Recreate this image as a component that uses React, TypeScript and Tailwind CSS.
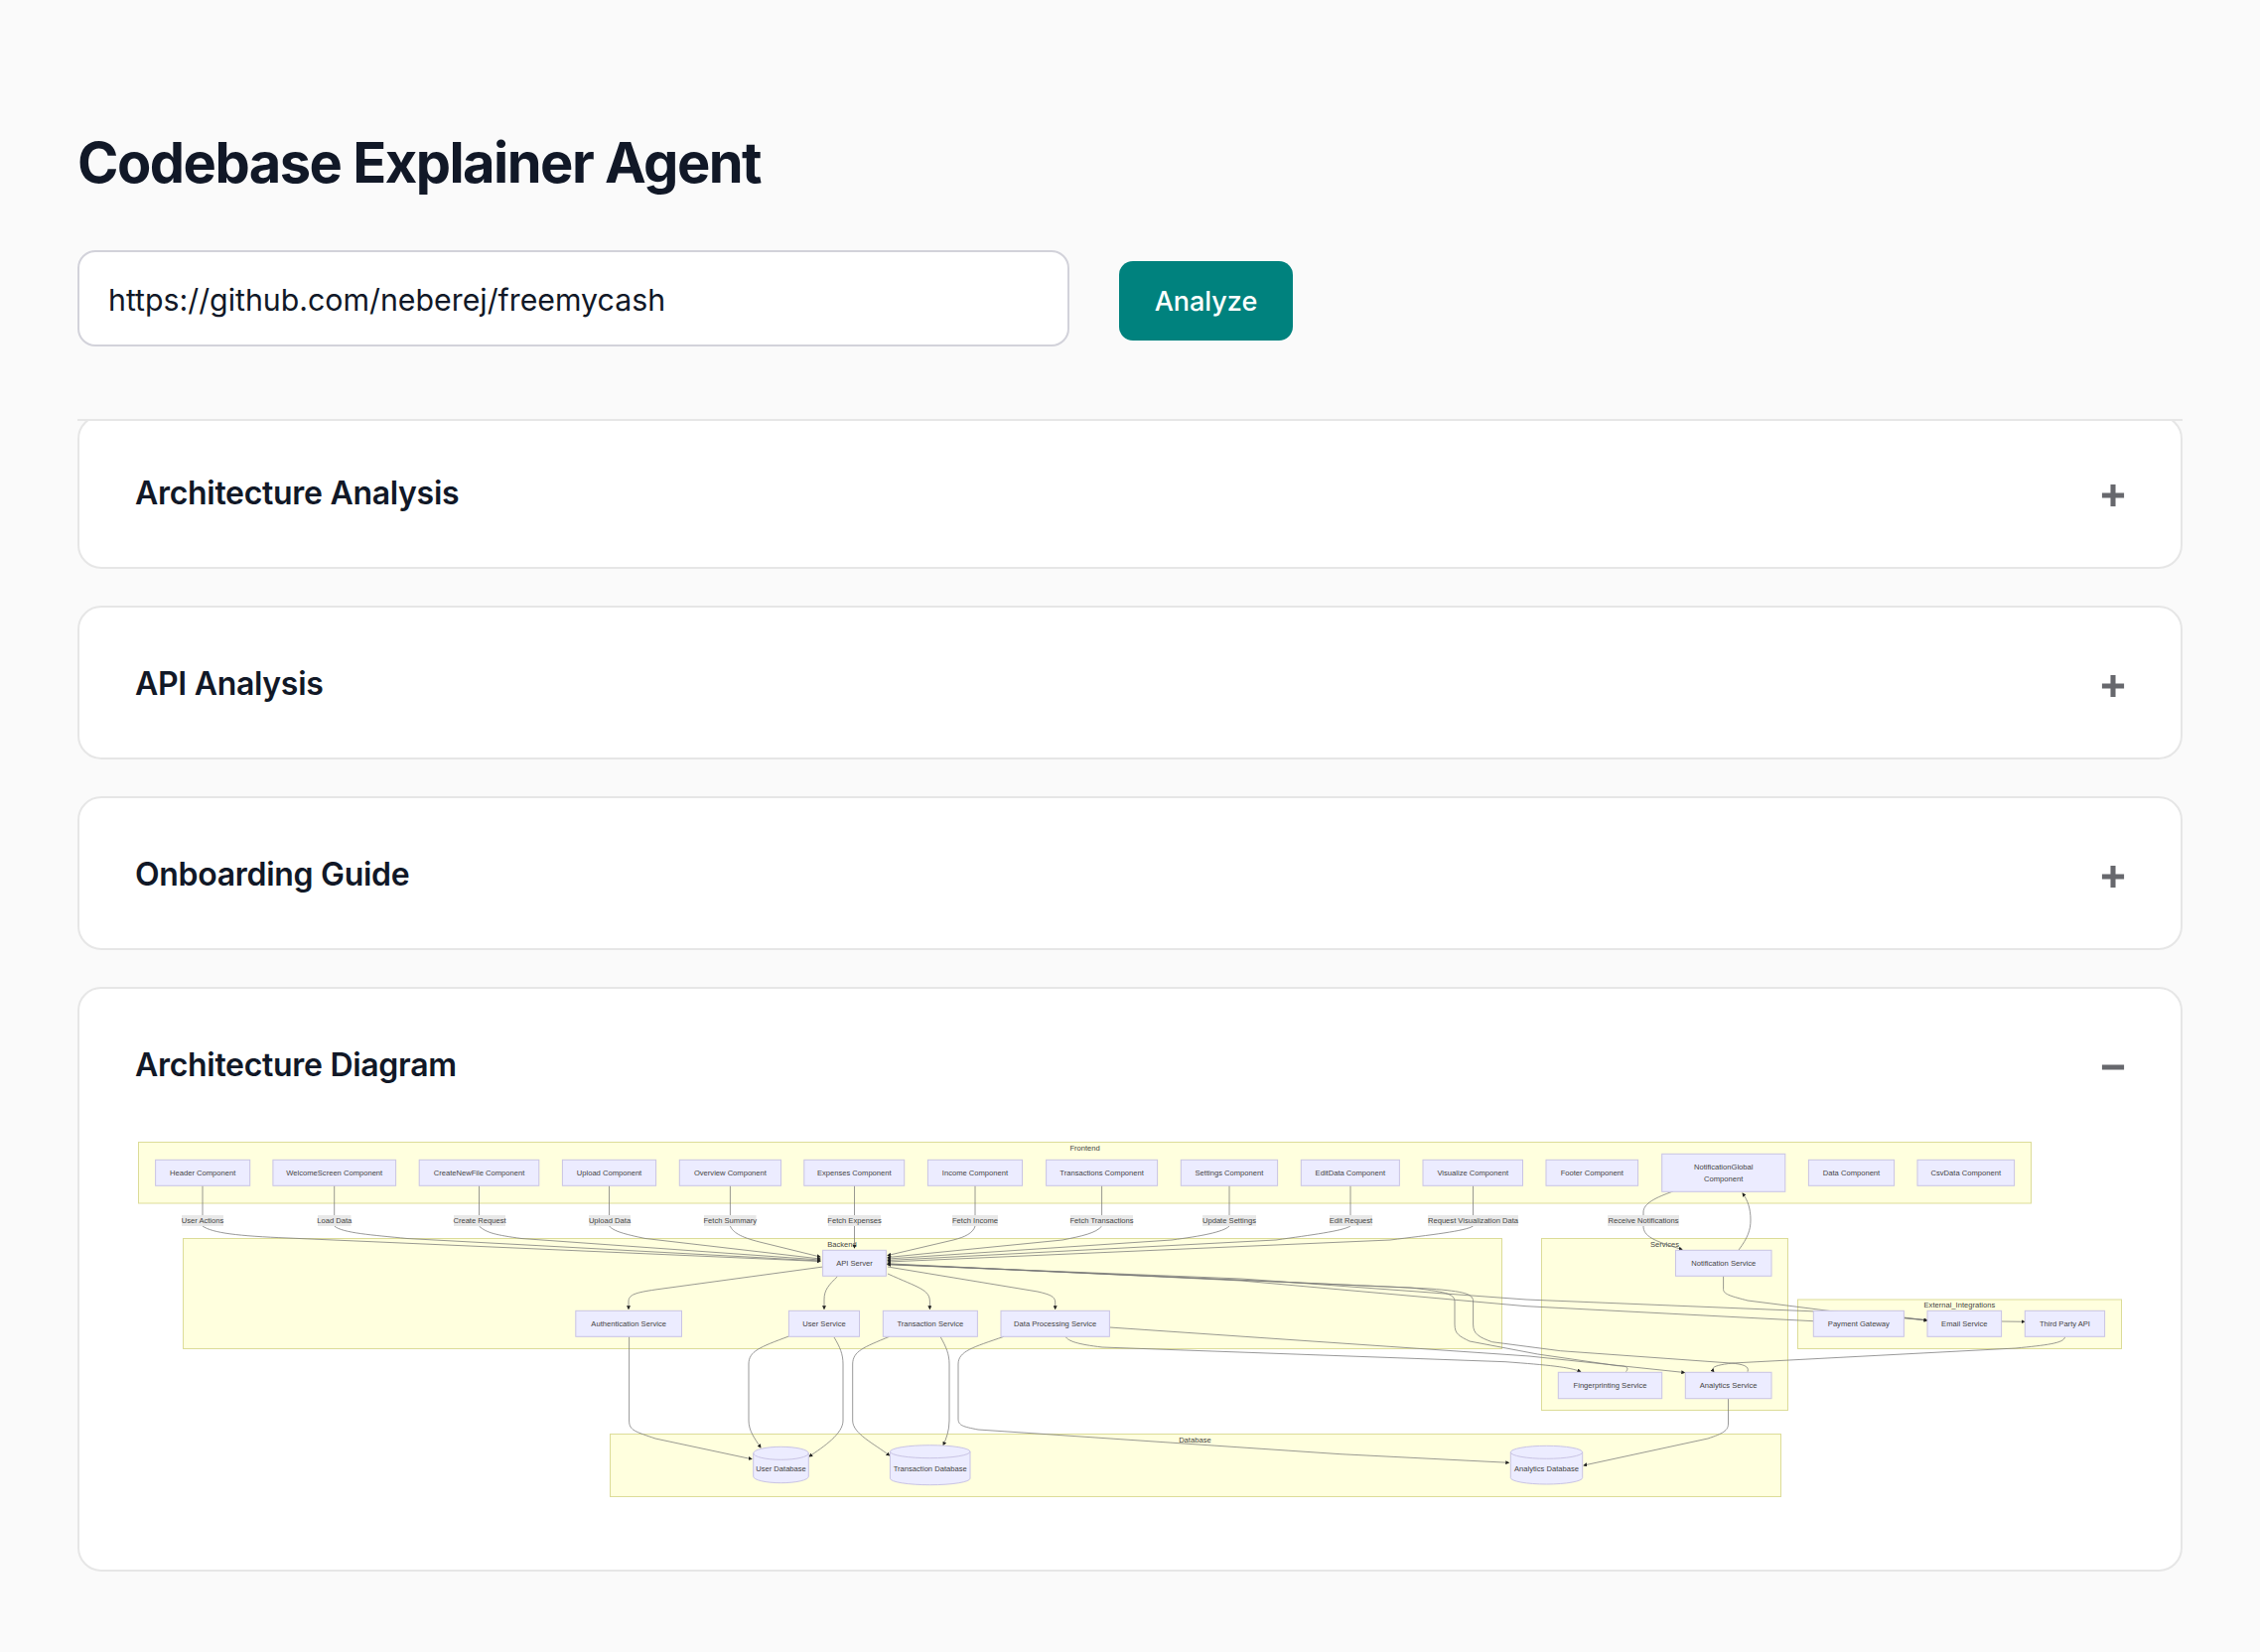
import { Plus, Minus } from 'lucide-react'

type Box = { label: string; x1: number; x2: number; y1?: number; y2?: number }

const CLUSTERS = [
  { label: 'Frontend', x1: 139.5, x2: 2045.5, y1: 1151.5, y2: 1213, cx: 1092.6, ty: 1157 },
  { label: 'Backend', x1: 184.5, x2: 1512.5, y1: 1248.5, y2: 1359.5, cx: 848, ty: 1254 },
  { label: 'Services', x1: 1552.5, x2: 1800.5, y1: 1248.5, y2: 1421.5, cx: 1676.5, ty: 1254 },
  { label: 'External_Integrations', x1: 1810.5, x2: 2136.5, y1: 1310, y2: 1359.5, cx: 1973.4, ty: 1315 },
  { label: 'Database', x1: 614.5, x2: 1793.5, y1: 1445.5, y2: 1508.5, cx: 1203.4, ty: 1451 },
]

const NODES: Box[] = [
  { label: 'Header Component', x1: 156.6, x2: 251.7 },
  { label: 'WelcomeScreen Component', x1: 274.9, x2: 398.6 },
  { label: 'CreateNewFile Component', x1: 422.2, x2: 542.8 },
  { label: 'Upload Component', x1: 566.4, x2: 660.6 },
  { label: 'Overview Component', x1: 684.3, x2: 786.5 },
  { label: 'Expenses Component', x1: 809.8, x2: 910.7 },
  { label: 'Income Component', x1: 934.4, x2: 1029.5 },
  { label: 'Transactions Component', x1: 1053.6, x2: 1165.6 },
  { label: 'Settings Component', x1: 1189.3, x2: 1286.6 },
  { label: 'EditData Component', x1: 1310.3, x2: 1409.4 },
  { label: 'Visualize Component', x1: 1433, x2: 1533.5 },
  { label: 'Footer Component', x1: 1557, x2: 1649.6 },
  { label: 'Data Component', x1: 1821.4, x2: 1907.6 },
  { label: 'CsvData Component', x1: 1931, x2: 2028.6 },
  { label: 'API Server', x1: 828.6, x2: 892.4, y1: 1260.3, y2: 1286.3 },
  { label: 'Notification Service', x1: 1687.5, x2: 1784, y1: 1260.3, y2: 1286.3 },
  { label: 'Authentication Service', x1: 579.8, x2: 686.5, y1: 1321.3, y2: 1347.3 },
  { label: 'User Service', x1: 794.4, x2: 865.5, y1: 1321.3, y2: 1347.3 },
  { label: 'Transaction Service', x1: 889.3, x2: 984.4, y1: 1321.3, y2: 1347.3 },
  { label: 'Data Processing Service', x1: 1008, x2: 1117.4, y1: 1321.3, y2: 1347.3 },
  { label: 'Payment Gateway', x1: 1826.3, x2: 1917.4, y1: 1321.3, y2: 1347.3 },
  { label: 'Email Service', x1: 1941, x2: 2015.6, y1: 1321.3, y2: 1347.3 },
  { label: 'Third Party API', x1: 2039.3, x2: 2119.6, y1: 1321.3, y2: 1347.3 },
  { label: 'Fingerprinting Service', x1: 1569.3, x2: 1673.7, y1: 1383.3, y2: 1409.7 },
  { label: 'Analytics Service', x1: 1697.3, x2: 1784, y1: 1383.3, y2: 1409.7 },
]

const CYLINDERS = [
  { label: 'User Database', x1: 758.7, x2: 814.3, y1: 1458.3, y2: 1494.7 },
  { label: 'Transaction Database', x1: 896.4, x2: 977, y1: 1456.7, y2: 1496.7 },
  { label: 'Analytics Database', x1: 1521.3, x2: 1593.7, y1: 1457.3, y2: 1496 },
]

const EDGE_LABELS = [
  { label: 'User Actions', x1: 183, x2: 225 },
  { label: 'Load Data', x1: 320, x2: 353.5 },
  { label: 'Create Request', x1: 457, x2: 509 },
  { label: 'Upload Data', x1: 593, x2: 635 },
  { label: 'Fetch Summary', x1: 709, x2: 761.5 },
  { label: 'Fetch Expenses', x1: 834, x2: 887 },
  { label: 'Fetch Income', x1: 959, x2: 1005 },
  { label: 'Fetch Transactions', x1: 1078, x2: 1141 },
  { label: 'Update Settings', x1: 1211, x2: 1265 },
  { label: 'Edit Request', x1: 1339, x2: 1382 },
  { label: 'Request Visualization Data', x1: 1438, x2: 1529 },
  { label: 'Receive Notifications', x1: 1619, x2: 1691 },
]

// edges with an arrowhead at the end
const EDGES = [
  'M204 1195V1236C214 1243 240 1246 290 1248L826 1271.5',
  'M336.7 1195V1236C345 1243 375 1245 410 1248.5L826 1271',
  'M482.5 1195V1236C490 1243 500 1245 525 1248.5L826 1270',
  'M613.5 1195V1236C618 1241 628 1244 650 1248.5L826 1269',
  'M735.4 1195V1236C738 1242 745 1247 765 1252L826 1267',
  'M860.5 1195V1258',
  'M982 1195V1236C980 1243 972 1247 960 1250L894 1265.5',
  'M1109.6 1195V1236C1104 1243 1090 1246 1070 1250L894 1267.5',
  'M1238 1195V1236C1232 1242 1210 1246 1180 1250L894 1269',
  'M1360 1195V1236C1352 1241 1320 1245 1285 1250L894 1270.5',
  'M1483.5 1195V1236C1476 1241 1440 1245 1400 1250L894 1272',
  'M1685 1201C1668 1207 1655 1213 1655 1222V1236C1655 1246 1665 1251 1694 1259.5',
  'M1751 1260C1760 1248 1763 1240 1763 1230C1763 1218 1760 1210 1755 1203',
  'M829 1277L660 1300C640 1303 633 1305 633 1312V1319.5',
  'M843.5 1286.7C835 1295 830 1300 830 1310V1319.5',
  'M894 1284C925 1298 936.4 1300 936.4 1312V1319.5',
  'M894 1277L1045 1302C1058 1305 1062 1307 1062.7 1312V1319.5',
  'M794.4 1347C765 1358 754 1362 754 1375V1432C754 1442 760 1450 766 1459',
  'M840 1348C846 1358 849 1365 849 1375V1432C849 1445 830 1458 815 1468',
  'M633.6 1347.3V1432C633.6 1442 640 1443 660 1450L757 1470.7',
  'M895.7 1347.3C870 1358 858.7 1362 858.7 1375V1432C858.7 1445 880 1455 895.7 1467',
  'M947 1347.3C953 1358 956 1365 956 1375V1432C956 1442 953 1450 950 1456.5',
  'M1011 1347.3C980 1358 965 1362 965 1375V1430C965 1437 970 1438 985 1441L1350 1465.7L1519.5 1474.3',
  'M1073 1347.3C1076 1352 1085 1355 1110 1358L1516 1372.7C1560 1376 1580 1378 1591.7 1382.5',
  'M1117.4 1338L1540 1367L1696.5 1383.5',
  'M2079.5 1347.7C2079 1354 2060 1356 2030 1359L1745 1374C1728 1376 1722 1378 1726 1383',
  'M1760 1382.7C1762 1377 1755 1375 1743 1374L1571.5 1361.7L1502.6 1352.7C1490 1348 1483.6 1345 1483.6 1335V1312C1483.6 1304 1475 1302 1440 1299L894 1274.5',
  'M1637.5 1382.7C1642 1377 1635 1377 1629 1376.7L1548.5 1365L1480 1352C1470 1347 1465 1345 1465 1335V1312C1465 1304 1455 1302 1420 1298L894 1274.2',
  'M1826 1331.7L1537 1316.7L1250 1291L894 1273.8',
  'M1941 1330.5L1847 1322.7L1537 1310L1250 1289L894 1274.8',
  'M1735.6 1286.3V1299.7C1735.6 1305 1745 1307 1760 1311L1847 1322L1941 1331',
  'M1917.4 1328L1940.5 1331',
  'M2015.6 1332L2038.8 1332.3',
  'M1740.5 1409.7V1435C1740.5 1442 1735 1445 1720 1450L1595 1477',
]

const svgText = '[font-family:Liberation_Sans,sans-serif] text-[7.6px] fill-[#444]'

function ArchitectureDiagram() {
  return (
    <svg viewBox="80 1148 2116 434" className="block w-full h-[434px]">
      <defs>
        <marker id="arrow" viewBox="0 0 10 10" refX="8" refY="5" markerWidth="4" markerHeight="4" markerUnits="userSpaceOnUse" orient="auto">
          <path d="M0 0L10 5L0 10z" fill="#222" />
        </marker>
      </defs>

      {CLUSTERS.map((c) => (
        <rect key={c.label} x={c.x1} y={c.y1} width={c.x2 - c.x1} height={c.y2 - c.y1} fill="#ffffde" stroke="#dcdc98" strokeWidth="1" />
      ))}
      {CLUSTERS.map((c) => (
        <text key={c.label} x={c.cx} y={c.ty} textAnchor="middle" dominantBaseline="central" className={svgText}>{c.label}</text>
      ))}

      {EDGES.map((d) => (
        <path key={d} d={d} fill="none" stroke="#777" strokeWidth="0.75" markerEnd="url(#arrow)" />
      ))}

      {NODES.map((n) => (
        <g key={n.label}>
          <rect x={n.x1} y={n.y1 ?? 1169.3} width={n.x2 - n.x1} height={(n.y2 ?? 1195.3) - (n.y1 ?? 1169.3)} fill="#ececff" stroke="#c9c4e4" strokeWidth="1" />
          <text x={(n.x1 + n.x2) / 2} y={((n.y1 ?? 1169.3) + (n.y2 ?? 1195.3)) / 2} textAnchor="middle" dominantBaseline="central" className={svgText}>{n.label}</text>
        </g>
      ))}

      {/* two line node */}
      <rect x="1673.7" y="1163.3" width="124.1" height="38" fill="#ececff" stroke="#c9c4e4" strokeWidth="1" />
      <text x="1735.7" y="1176" textAnchor="middle" dominantBaseline="central" className={svgText}>NotificationGlobal</text>
      <text x="1735.7" y="1188" textAnchor="middle" dominantBaseline="central" className={svgText}>Component</text>

      {CYLINDERS.map((c) => {
        const rx = (c.x2 - c.x1) / 2
        return (
          <g key={c.label}>
            <path
              d={`M${c.x1} ${c.y1 + 6.5}A${rx} 6.5 0 0 1 ${c.x2} ${c.y1 + 6.5}V${c.y2 - 6.5}A${rx} 6.5 0 0 1 ${c.x1} ${c.y2 - 6.5}Z`}
              fill="#ececff"
              stroke="#c9c4e4"
              strokeWidth="1"
            />
            <path d={`M${c.x1} ${c.y1 + 6.5}A${rx} 6.5 0 0 0 ${c.x2} ${c.y1 + 6.5}`} fill="none" stroke="#c9c4e4" strokeWidth="1" />
            <text x={c.x1 + rx} y={(c.y1 + c.y2) / 2 + 3.5} textAnchor="middle" dominantBaseline="central" className={svgText}>{c.label}</text>
          </g>
        )
      })}

      {EDGE_LABELS.map((l) => (
        <g key={l.label}>
          <rect x={l.x1} y="1225" width={l.x2 - l.x1} height="11" fill="#e8e8e8" />
          <text x={(l.x1 + l.x2) / 2} y="1230.3" textAnchor="middle" dominantBaseline="central" className={svgText}>{l.label}</text>
        </g>
      ))}
    </svg>
  )
}

function Section({ title, open, children }: { title: string; open?: boolean; children?: React.ReactNode }) {
  return (
    <section className="rounded-[24px] border-2 border-[#e6e6e6] bg-white overflow-hidden">
      <div className="flex items-center justify-between h-[151px] pl-[56px] pr-[49px]">
        <h2 className="mt-[2px] text-[32px] leading-[40px] font-semibold tracking-[-0.3px] text-[#111827]">{title}</h2>
        {open ? (
          <Minus className="w-[38px] h-[38px] text-[#67686d] mt-[6px]" strokeWidth={3.2} strokeLinecap="butt" />
        ) : (
          <Plus className="w-[38px] h-[38px] text-[#67686d] mt-[7px]" strokeWidth={3.2} strokeLinecap="butt" />
        )}
      </div>
      {children}
    </section>
  )
}

export default function App() {
  return (
    <div className="min-h-screen bg-[#fafafa] [font-family:Inter,sans-serif] px-[78px] pt-[132px] pb-[81px]">
      <h1 className="text-[56px] leading-[64px] font-bold text-[#111827] tracking-[-0.027em]">Codebase Explainer Agent</h1>

      <div className="flex items-center gap-[50px] mt-[56px]">
        <input
          readOnly
          value="https://github.com/neberej/freemycash"
          className="w-[999px] h-[97px] rounded-[18px] border-2 border-[#d2d2da] bg-white pl-[29px] pr-[30px] pt-[2px] text-[30.3px] text-[#111827] outline-none"
        />
        <button className="w-[175px] h-[80px] mt-[5px] pt-[3px] rounded-[14px] bg-[#00827e] text-white text-[27px] font-medium">Analyze</button>
      </div>

      <div className="mt-[73px] border-t-2 border-[#e6e6e6] flex flex-col gap-[37px]">
        {/* first card sits under the divider, its top edge is cut off */}
        <div className="overflow-hidden">
          <div className="-mt-[6px]">
            <Section title="Architecture Analysis" />
          </div>
        </div>
        <Section title="API Analysis" />
        <Section title="Onboarding Guide" />
        <Section title="Architecture Diagram" open>
          <ArchitectureDiagram />
        </Section>
      </div>
    </div>
  )
}
